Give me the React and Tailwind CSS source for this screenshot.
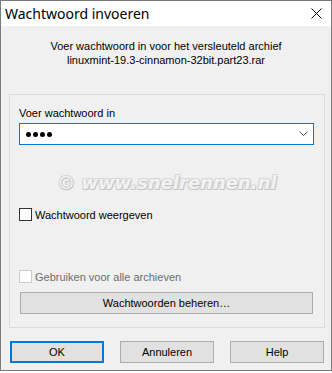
import React from "react";

const font = { fontFamily: '"Liberation Sans", "Segoe UI", sans-serif' };

function Checkbox({ label, disabled }) {
  return (
    <div className="flex items-center h-[13px]">
      <div
        className={
          "w-[13px] h-[13px] shrink-0 bg-white border " +
          (disabled ? "border-[#cccccc]" : "border-[#333333]")
        }
      />
      <span
        className={
          "ml-[3px] text-[11px] leading-[14px] " +
          (disabled ? "text-[#6d6d6d]" : "text-black")
        }
      >
        {label}
      </span>
    </div>
  );
}

export default function App() {
  return (
    <div className="w-[332px] h-[373px] bg-white" style={font}>
      <div className="w-[332px] h-[371px] border border-[#7a7a7a] flex flex-col">
        {/* title bar */}
        <div className="h-[25px] shrink-0 bg-white flex items-center justify-between pl-[4px] pr-[9px]">
          <span
            className="text-[14px] leading-[18px] text-black"
            style={{ fontFamily: '"Noto Sans", sans-serif' }}
          >
            Wachtwoord invoeren
          </span>
          <svg width="11" height="11" viewBox="0 0 11 11">
            <path d="M0.5 0.5 L10.5 10.5 M10.5 0.5 L0.5 10.5" stroke="#000" strokeWidth="1" />
          </svg>
        </div>
        {/* body */}
        <div className="flex-1 bg-[#f0f0f0] flex flex-col">
          <div className="pt-[13px] text-center text-[11px] leading-[14px] text-black">
            <div>Voer wachtwoord in voor het versleuteld archief</div>
            <div>linuxmint-19.3-cinnamon-32bit.part23.rar</div>
          </div>

          <div className="ml-[8px] mt-[27px] w-[316px] h-[234px] shrink-0 border border-[#dcdcdc] px-[9px] pt-[11px] flex flex-col">
            <div className="text-[11px] leading-[14px] text-black">Voer wachtwoord in</div>
            <div className="mt-[3px] w-[295px] h-[22px] shrink-0 bg-white border border-[#0078d7] flex items-center justify-between pl-[6px] pr-[5px]">
              <div className="flex gap-[2px]">
                <div className="w-[5px] h-[5px] rounded-full bg-black" />
                <div className="w-[5px] h-[5px] rounded-full bg-black" />
                <div className="w-[5px] h-[5px] rounded-full bg-black" />
                <div className="w-[5px] h-[5px] rounded-full bg-black" />
              </div>
              <svg width="9" height="6" viewBox="0 0 9 6">
                <path d="M0.5 0.5 L4.5 4.5 L8.5 0.5" stroke="#555" strokeWidth="1" fill="none" />
              </svg>
            </div>

            <div className="mt-[29px] h-[18px] shrink-0 flex items-center justify-center pl-[4px] pr-[4px]">
              <span
                className="italic font-bold text-[18px] leading-[18px] text-[#f2f2f2] [text-shadow:1px_1px_0_#c4c4c4,-1px_-1px_0_#d8d8d8,1px_-1px_0_#d8d8d8,-1px_1px_0_#d0d0d0]"
                style={{ fontFamily: '"DejaVu Sans", sans-serif' }}
              >
                © www.snelrennen.nl
              </span>
            </div>

            <div className="mt-[16px]">
              <Checkbox label="Wachtwoord weergeven" />
            </div>
            <div className="mt-[49px]">
              <Checkbox label="Gebruiken voor alle archieven" disabled />
            </div>
            <button className="mt-[9px] ml-[1px] w-[293px] h-[22px] shrink-0 bg-[#e1e1e1] border border-[#adadad] text-[11px] text-black">
              Wachtwoorden beheren…
            </button>
          </div>

          <div className="mt-[13px] flex pl-[9px] gap-[16px]">
            <button className="w-[94px] h-[22px] bg-[#e1e1e1] border-2 border-[#0078d7] text-[11px] text-black">
              OK
            </button>
            <button className="w-[94px] h-[22px] bg-[#e1e1e1] border border-[#adadad] text-[11px] text-black">
              Annuleren
            </button>
            <button className="w-[94px] h-[22px] bg-[#e1e1e1] border border-[#adadad] text-[11px] text-black">
              Help
            </button>
          </div>
        </div>
      </div>
    </div>
  );
}
